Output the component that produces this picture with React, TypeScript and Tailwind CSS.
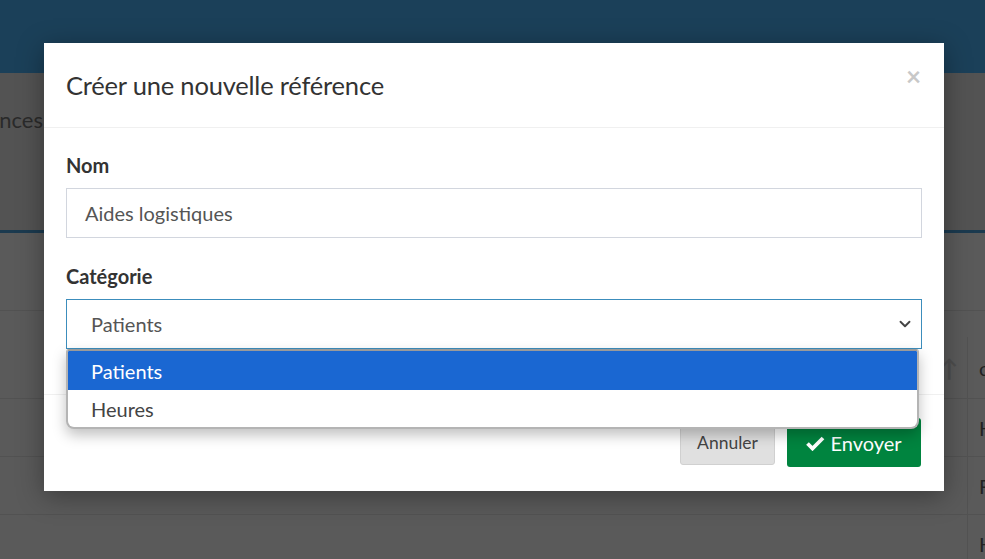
import React from 'react';
import { ChevronDown } from 'lucide-react';

const font = { fontFamily: 'Lato, "Noto Sans", sans-serif' };

const Background = () => {
  return (
    <div className="w-[985px] h-[559px] bg-[#5a5a5a] flex flex-col overflow-hidden">
      <div className="h-[73px] bg-[#1b4059] shrink-0" />
      <div className="h-[157px] bg-[#535353] shrink-0 flex items-start pt-[30px]">
        <div className="w-[43px] flex justify-end overflow-hidden whitespace-nowrap">
          <span className="text-[22px] text-[#2a2a2a]">Références</span>
        </div>
      </div>
      <div className="h-[3px] bg-[#1b3a4f] shrink-0" />
      <div className="h-[78px] shrink-0 border-b border-[#525252]" />
      <div className="flex flex-col">
        {['c', 'H', 'F', 'H'].map((t, i) => (
          <div
            key={i}
            className={`${i === 0 ? 'h-[88px] pt-[26px]' : 'h-[58px]'} border-b border-[#525252] flex justify-end`}
          >
            <div className="w-[36px] flex items-center justify-center">
              {i === 0 && <span className="text-[#4e4e4e] text-[24px] font-bold">↑</span>}
            </div>
            <div className="w-[18px] border-l border-[#525252] flex items-center pl-[11px] text-[20px] text-[#222]">
              {t}
            </div>
          </div>
        ))}
      </div>
    </div>
  );
};

const Modal = () => {
  return (
    <div className="absolute left-[44px] top-[43px] w-[900px] h-[448px] bg-white shadow-[0_5px_25px_rgba(0,0,0,0.35)] flex flex-col">
      <div className="h-[85px] border-b border-[#f0f0f0] flex items-center justify-between px-[22px]">
        <h4 className="text-[25.5px] text-[#333] tracking-[-0.2px]">Créer une nouvelle référence</h4>
        <span className="text-[26px] font-bold text-[#c8c8c8] leading-none -mt-[18px] mr-[1px]">×</span>
      </div>
      <div className="px-[22px] pt-[25px] flex flex-col">
        <label className="text-[20px] font-bold text-[#333] leading-[24px]">Nom</label>
        <div className="mt-[11px] h-[50px] border border-[#d2d6de] flex items-center px-[18px] text-[20px] text-[#555]">
          Aides logistiques
        </div>
        <label className="mt-[26px] text-[20px] font-bold text-[#333] leading-[24px]">Catégorie</label>
        <div className="relative mt-[11px]">
          <div className="h-[50px] border border-[#3c8dbc] flex items-center justify-between pl-[24px] pr-[6px] text-[20px] text-[#555]">
            <span>Patients</span>
            <ChevronDown size={18} strokeWidth={2.5} className="text-[#444] mr-[1px]" />
          </div>
          <div className="absolute left-[0px] top-[50px] w-[853px] bg-white rounded-b-[8px] rounded-t-[3px] border-2 border-[#b4b4b4] border-t-[#9a9a9a] shadow-[0_6px_14px_rgba(0,0,0,0.25)] overflow-hidden z-10">
            <div className="h-[39px] bg-[#1a67d2] text-white text-[20px] flex items-center pl-[23px]">Patients</div>
            <div className="h-[37px] text-[#444] text-[20px] flex items-center pl-[23px]">Heures</div>
          </div>
        </div>
      </div>
      <div className="mt-[45px] border-t border-[#f0f0f0] flex justify-end items-start gap-[12px] px-[23px] pt-[23px]">
        <button className="h-[47px] w-[95px] flex items-center justify-center pt-[3px] bg-[#e0e0e0] border border-[#d0d0d0] rounded-[3px] text-[17.5px] text-[#444]">
          Annuler
        </button>
        <button className="h-[49px] w-[134px] justify-center bg-[#00843f] rounded-[3px] text-[20px] text-white flex items-center gap-[5px]">
          <svg width="19" height="16" viewBox="0 0 19 16">
            <path d="M1.5 8.5 L6.5 13.5 L17 3" stroke="#fff" strokeWidth="3.8" fill="none" strokeLinejoin="miter" />
          </svg>
          Envoyer
        </button>
      </div>
    </div>
  );
};

export default function App() {
  return (
    <div className="relative w-[985px] h-[559px] overflow-hidden" style={font}>
      <Background />
      <Modal />
    </div>
  );
}
